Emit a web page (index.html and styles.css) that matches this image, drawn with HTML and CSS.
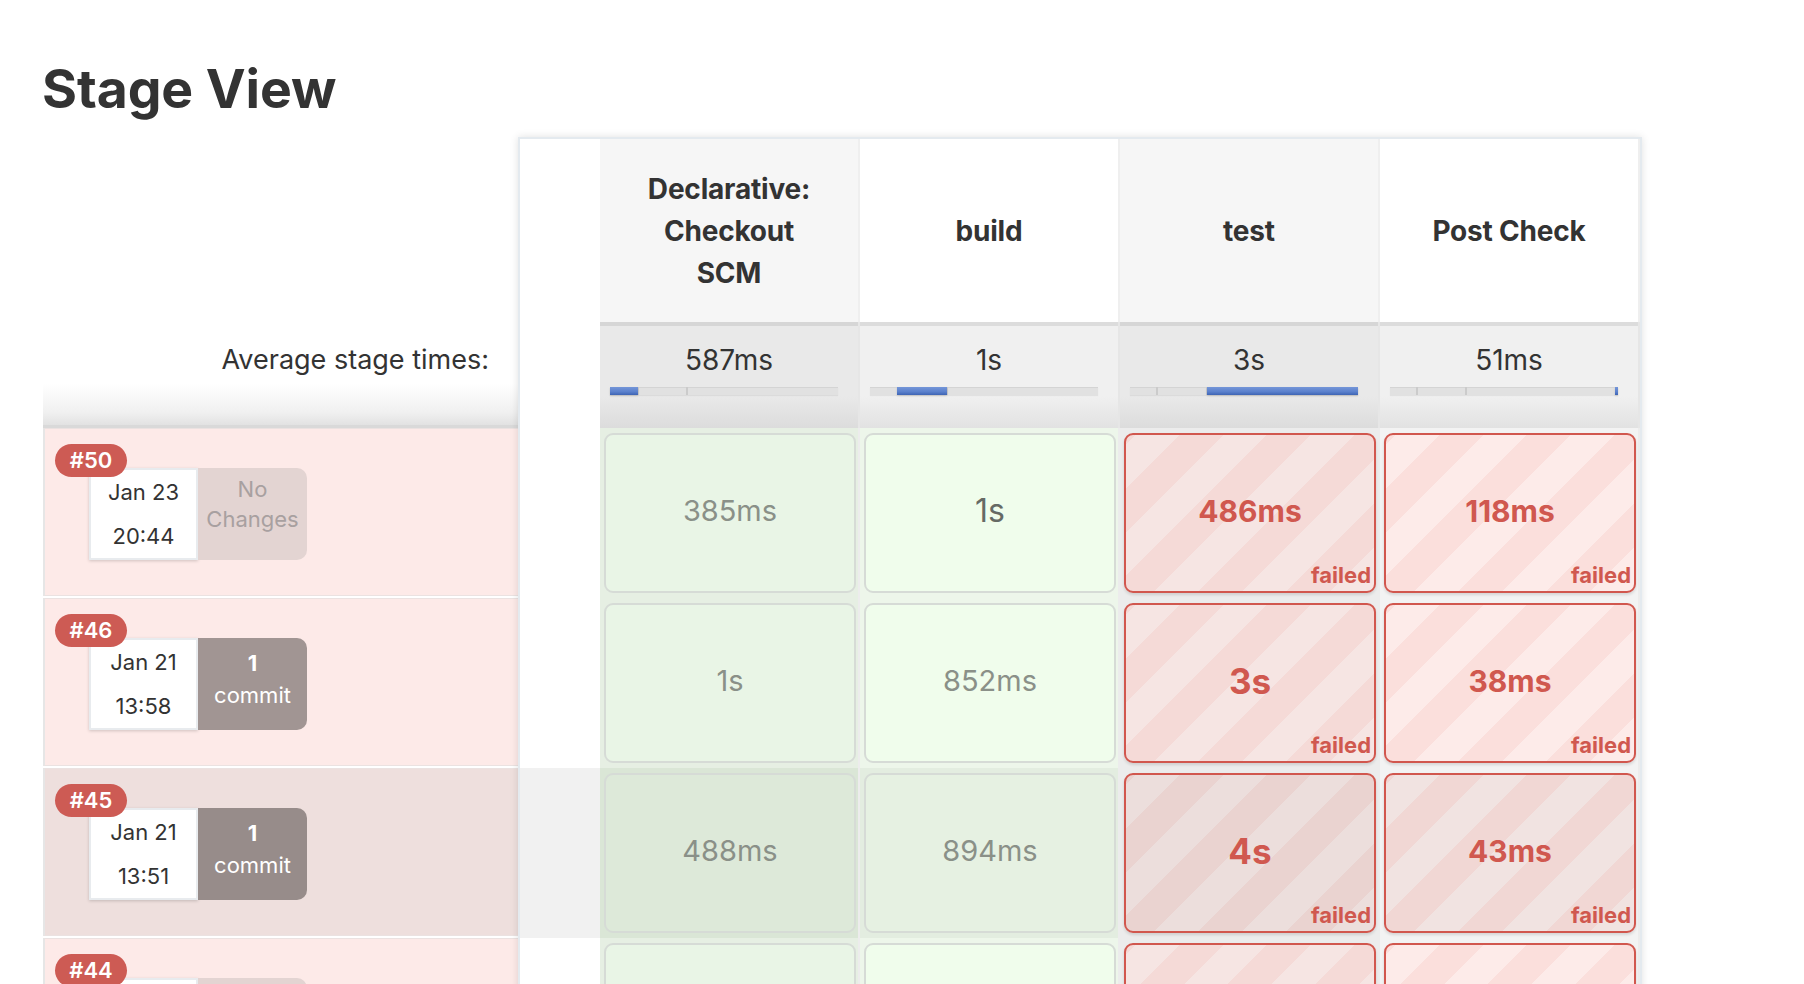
FILE: index.html
```html
<!DOCTYPE html>
<html lang="en">
<head>
<meta charset="utf-8">
<title>Stage View</title>
<link rel="stylesheet" href="styles.css">
</head>
<body>
<div class="page">
  <h2 class="title">Stage View</h2>
  <div class="stage-view">
    <div class="history">
      <div class="history-head"></div>
      <div class="avg-label">Average stage times:</div>

      <div class="build">
        <span class="badge">#50</span>
        <div class="build-info">
          <div class="date"><div>Jan 23</div><div>20:44</div></div>
          <div class="changes none"><div>No</div><div>Changes</div></div>
        </div>
      </div>

      <div class="build">
        <span class="badge">#46</span>
        <div class="build-info">
          <div class="date"><div>Jan 21</div><div>13:58</div></div>
          <div class="changes commit"><div class="num">1</div><div>commit</div></div>
        </div>
      </div>

      <div class="build hover">
        <span class="badge">#45</span>
        <div class="build-info">
          <div class="date"><div>Jan 21</div><div>13:51</div></div>
          <div class="changes commit"><div class="num">1</div><div>commit</div></div>
        </div>
      </div>

      <div class="build">
        <span class="badge">#44</span>
        <div class="build-info">
          <div class="date"><div>Jan 21</div><div>13:40</div></div>
          <div class="changes none"><div>No</div><div>Changes</div></div>
        </div>
      </div>
    </div>

    <div class="table">
      <div class="trow head">
        <div class="spacer"></div>
        <div class="col alt"><span class="stage-name">Declarative: Checkout SCM</span></div>
        <div class="col"><span class="stage-name">build</span></div>
        <div class="col alt"><span class="stage-name">test</span></div>
        <div class="col"><span class="stage-name">Post Check</span></div>
      </div>

      <div class="trow avg">
        <div class="spacer"></div>
        <div class="col alt">
          <div class="avg-val">587ms</div>
          <div class="track"><span class="tick" style="left:27px"></span><span class="tick" style="left:76px"></span><span class="fill" style="left:0;width:28px"></span></div>
        </div>
        <div class="col">
          <div class="avg-val">1s</div>
          <div class="track"><span class="tick" style="left:27px"></span><span class="tick" style="left:76px"></span><span class="fill" style="left:27px;width:50px"></span></div>
        </div>
        <div class="col alt">
          <div class="avg-val">3s</div>
          <div class="track"><span class="tick" style="left:26px"></span><span class="tick" style="left:76px"></span><span class="fill" style="left:77px;width:151px"></span></div>
        </div>
        <div class="col">
          <div class="avg-val">51ms</div>
          <div class="track"><span class="tick" style="left:26px"></span><span class="tick" style="left:75px"></span><span class="fill" style="left:225px;width:3px"></span></div>
        </div>
      </div>

      <div class="trow brow">
        <div class="spacer"></div>
        <div class="col alt ok"><div class="cell"><span class="val">385ms</span></div></div>
        <div class="col ok"><div class="cell"><span class="val long">1s</span></div></div>
        <div class="col alt bad"><div class="cell"><span class="val">486ms</span><span class="flag">failed</span></div></div>
        <div class="col bad"><div class="cell"><span class="val">118ms</span><span class="flag">failed</span></div></div>
      </div>

      <div class="trow brow">
        <div class="spacer"></div>
        <div class="col alt ok"><div class="cell"><span class="val">1s</span></div></div>
        <div class="col ok"><div class="cell"><span class="val">852ms</span></div></div>
        <div class="col alt bad"><div class="cell"><span class="val big">3s</span><span class="flag">failed</span></div></div>
        <div class="col bad"><div class="cell"><span class="val">38ms</span><span class="flag">failed</span></div></div>
      </div>

      <div class="trow brow hover">
        <div class="spacer"></div>
        <div class="col alt ok"><div class="cell"><span class="val">488ms</span></div></div>
        <div class="col ok"><div class="cell"><span class="val">894ms</span></div></div>
        <div class="col alt bad"><div class="cell"><span class="val big">4s</span><span class="flag">failed</span></div></div>
        <div class="col bad"><div class="cell"><span class="val">43ms</span><span class="flag">failed</span></div></div>
      </div>

      <div class="trow brow">
        <div class="spacer"></div>
        <div class="col alt ok"><div class="cell"><span class="val">402ms</span></div></div>
        <div class="col ok"><div class="cell"><span class="val">873ms</span></div></div>
        <div class="col alt bad"><div class="cell"><span class="val">3s</span><span class="flag">failed</span></div></div>
        <div class="col bad"><div class="cell"><span class="val">45ms</span><span class="flag">failed</span></div></div>
      </div>
    </div>
  </div>
</div>
</body>
</html>
```

FILE: styles.css
```css
* { box-sizing: border-box; }
html, body { margin: 0; padding: 0; background: #fff; overflow: hidden; }
body { font-family: Inter, "Noto Sans", "Liberation Sans", sans-serif; color: #333; }

.page { padding-left: 42px; }

.title {
  margin: 0;
  height: 137px;
  padding-top: 57px;
  font-size: 53.5px;
  line-height: 64px;
  font-weight: 700;
  color: #333;
  letter-spacing: -0.1px;
}

.stage-view { display: flex; align-items: flex-start; margin-left: 1px; }

/* ---------- left: build history ---------- */
.history { width: 475px; flex: none; }
.history-head { height: 185px; }
.avg-label {
  height: 106px;
  padding: 18px 29px 0 0;
  text-align: right;
  font-size: 27px;
  line-height: 40px;
  color: #333;
  background: linear-gradient(to bottom, #fff 0%, #fff 60%, #f0f0f0 88%, #e2e2e2 100%);
  border-bottom: 3px solid #d9d9d9;
}

.build {
  height: 168px;
  margin-bottom: 2px;
  padding: 15px 0 0 10px;
  background: #fdeae8;
  border: 1px solid #ebe2e1;
  border-left: 2px solid #e6e6e6;
  border-right: none;
}
.build.hover { background: #eedfdd; }

.badge {
  position: relative;
  z-index: 1;
  display: block;
  width: 72px;
  height: 33px;
  border-radius: 17px;
  background: #cd5b54;
  color: #fff;
  font-size: 22px;
  font-weight: 600;
  line-height: 33px;
  text-align: center;
}

.build-info {
  display: flex;
  margin: -9px 0 0 34px;
}
.date {
  width: 109px;
  height: 92px;
  padding-top: 0;
  background: #fff;
  border: 2px solid #e8ebee;
  box-shadow: 0 1px 3px rgba(0,0,0,.18);
  text-align: center;
  font-size: 22px;
  line-height: 44px;
  color: #333;
}
.changes {
  width: 109px;
  height: 92px;
  border-radius: 0 10px 10px 0;
  text-align: center;
  font-size: 22px;
}
.changes.none {
  padding-top: 6px;
  line-height: 30px;
  background: #e3d4d2;
  color: #a8a0a0;
}
.changes.commit {
  padding-top: 9px;
  line-height: 32px;
  background: #a19593;
  color: #fff;
}
.build.hover .changes.commit { background: #978c8a; }
.changes .num { font-weight: 700; }

/* ---------- right: stage table ---------- */
.table {
  width: 1124px;
  flex: none;
  background: #fff;
  border: 2px solid #e4eaef;
  border-bottom: none;
  box-shadow: 0 0 8px rgba(0,0,0,.12);
}
.trow { display: flex; }
.spacer { width: 80px; flex: none; background: #fff; }
.col { width: 260px; flex: none; border-right: 2px solid #eeeeee; }

/* header */
.trow.head { height: 183px; }
.trow.head .col {
  display: flex;
  align-items: center;
  justify-content: center;
  padding: 0 40px;
  text-align: center;
  background: #fff;
  border-right-color: #efefef;
}
.trow.head .col.alt { background: #f6f6f6; }
.stage-name { font-size: 28px; font-weight: 700; line-height: 42px; color: #333; letter-spacing: -0.2px; }

/* averages */
.trow.avg { height: 106px; }
.trow.avg .col {
  padding-top: 18px;
  background: linear-gradient(to bottom, #dcdcdc 0, #dcdcdc 4px, #f0f0f0 4px, #f0f0f0 70%, #e2e2e2 100%);
  border-right-color: #e6e6e6;
}
.trow.avg .col.alt {
  background: linear-gradient(to bottom, #d6d6d6 0, #d6d6d6 4px, #e9e9e9 4px, #e9e9e9 70%, #dcdcdc 100%);
}
.avg-val { text-align: center; font-size: 28px; line-height: 40px; color: #333; }
.track {
  position: relative;
  width: 228px;
  height: 8px;
  margin: 7px 0 0 10px;
  background: #e1e1e1;
  border-top: 1px solid #d4d4d4;
  box-shadow: 0 1px 1px rgba(0,0,0,.06);
}
.tick { position: absolute; top: -1px; width: 2px; height: 8px; background: #cbcbcb; }
.fill {
  position: absolute;
  top: -1px;
  height: 8px;
  background: linear-gradient(to bottom, #7596d8 0%, #5a80cc 60%, #3e64b4 100%);
  box-shadow: 0 1px 2px rgba(0,0,0,.15);
}

/* build rows */
.trow.brow { height: 170px; }
.trow.brow.hover .spacer { background: #f1f1f1; }
.brow .col {
  padding: 5px 2px 5px 4px;
  border-right-color: #ececec;
}
.brow .col.ok { background: #edf6ea; }
.brow .col.alt.ok { background: #e6efe3; }
.brow .col.bad { background: #f3f3f3; }
.brow .col.alt.bad { background: #ececec; }

.cell {
  display: grid;
  height: 160px;
  border-radius: 9px;
  border: 2px solid #d6dbd6;
}
.cell > * { grid-area: 1 / 1; }
.val {
  align-self: center;
  justify-self: center;
  font-size: 29px;
  line-height: 36px;
  padding-bottom: 4px;
}
.ok .cell { background: #f0fdec; }
.alt.ok .cell { background: #e9f5e6; }
.ok .val { color: #8a9088; }
.ok .val.long { font-size: 32px; color: #666a65; }
.hover .ok .cell { background: #e6f1e2; }
.hover .alt.ok .cell { background: #dde9d9; }
.hover .col.ok { background: #e3ede0; }
.hover .col.alt.ok { background: #dae6d6; }

.bad .cell {
  --dk: #fbdfdc;
  --lt: #fdebe9;
  border-color: #d1574e;
  box-shadow: 0 2px 3px rgba(0,0,0,.12);
  background: repeating-linear-gradient(-45deg, var(--lt) 0 31px, var(--dk) 31px 62px);
}
.alt.bad .cell { --dk: #f5dad7; --lt: #f6e5e3; }
.hover .bad .cell { --dk: #f1d7d4; --lt: #f1e3e1; }
.hover .alt.bad .cell { --dk: #ead3d0; --lt: #ecdedc; }
.bad .val { color: #d0584f; font-weight: 700; font-size: 30px; }
.bad .val.big { font-size: 35px; }
.flag {
  align-self: end;
  justify-self: end;
  padding: 0 3px 6px 0;
  font-size: 22px;
  font-weight: 700;
  line-height: 20px;
  color: #d0584f;
}
```
